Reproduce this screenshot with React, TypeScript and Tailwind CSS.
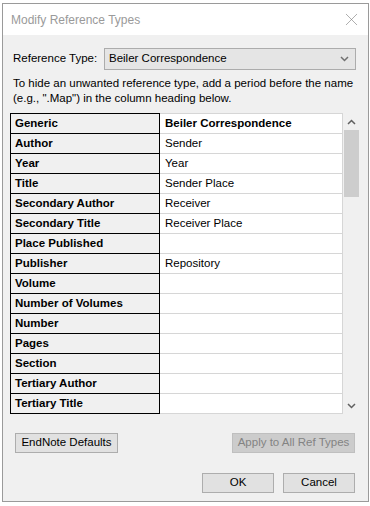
import { X } from "lucide-react";

const fields: [string, string][] = [
  ["Generic", "Beiler Correspondence"],
  ["Author", "Sender"],
  ["Year", "Year"],
  ["Title", "Sender Place"],
  ["Secondary Author", "Receiver"],
  ["Secondary Title", "Receiver Place"],
  ["Place Published", ""],
  ["Publisher", "Repository"],
  ["Volume", ""],
  ["Number of Volumes", ""],
  ["Number", ""],
  ["Pages", ""],
  ["Section", ""],
  ["Tertiary Author", ""],
  ["Tertiary Title", ""],
];

function Chevron({ up, color = "#606060" }: { up?: boolean; color?: string }) {
  return (
    <svg width="9" height="6" viewBox="0 0 9 6" className="block">
      <path
        d={up ? "M1 5 L4.5 1.5 L8 5" : "M1 1 L4.5 4.5 L8 1"}
        fill="none"
        stroke={color}
        strokeWidth="1.5"
      />
    </svg>
  );
}

export default function App() {
  return (
    <div
      className="w-[370px] h-[506px] bg-white pt-[3px] pl-[2px] text-[11.5px] text-black"
      style={{ fontFamily: '"Liberation Sans", Arial, sans-serif' }}
    >
      <div className="w-[367px] h-[499px] border border-[#9a9a9a] flex flex-col">
        {/* title bar */}
        <div className="h-[31px] bg-white flex items-center justify-between pl-[8px] pr-[6px]">
          <span className="text-[#9a9a9a] text-[12px]">Modify Reference Types</span>
          <X size={21} strokeWidth={0.7} color="#7a7a7a" />
        </div>

        <div className="flex-1 bg-[#f0f0f0] flex flex-col">
          <div className="flex items-center mt-[13px] pl-[10px]">
            <span className="w-[91px]">Reference Type:</span>
            <div className="w-[252px] h-[22px] bg-[#e5e5e5] border border-[#acacac] flex items-center justify-between pl-[4px] pr-[6px]">
              <span>Beiler Correspondence</span>
              <Chevron color="#707070" />
            </div>
          </div>

          <p className="mt-[6px] pl-[10px] leading-[15px]">
            To hide an unwanted reference type, add a period before the name
            <br />
            (e.g., ".Map") in the column heading below.
          </p>

          <div className="flex mt-[7px] pl-[7px]">
            <div className="w-[333px] flex flex-col">
              {fields.map(([name, value], i) => (
                <div key={name} className={`flex ${i === 0 ? "h-[21px]" : "h-[20px]"}`}>
                  <div
                    className={`w-[150px] border-l border-r border-b border-black pl-[4px] flex items-center font-bold ${
                      i === 0 ? "border-t" : ""
                    }`}
                  >
                    {name}
                  </div>
                  <div
                    className={`flex-1 bg-white border-r border-b border-[#d6d6d6] pl-[5px] flex items-center ${
                      i === 0 ? "border-t font-bold" : ""
                    }`}
                  >
                    {value}
                  </div>
                </div>
              ))}
            </div>
            <div className="w-[17px] flex flex-col items-center">
              <div className="h-[17px] flex items-center justify-center">
                <Chevron up />
              </div>
              <div className="w-[15px] h-[67px] bg-[#cdcdcd]" />
              <div className="flex-1" />
              <div className="h-[17px] flex items-center justify-center">
                <Chevron />
              </div>
            </div>
          </div>

          <div className="flex justify-between mt-[19px] pl-[12px] pr-[13px]">
            <button className="w-[103px] h-[20px] bg-[#e1e1e1] border border-[#adadad] flex items-center justify-center">
              EndNote Defaults
            </button>
            <button className="w-[123px] h-[20px] bg-[#cccccc] border border-[#bfbfbf] text-[#838383] flex items-center justify-center">
              Apply to All Ref Types
            </button>
          </div>

          <div className="flex justify-end gap-[9px] mt-[20px] pr-[13px]">
            <button className="w-[72px] h-[20px] bg-[#e1e1e1] border border-[#adadad] flex items-center justify-center">
              OK
            </button>
            <button className="w-[72px] h-[20px] bg-[#e1e1e1] border border-[#adadad] flex items-center justify-center">
              Cancel
            </button>
          </div>
        </div>
      </div>
    </div>
  );
}
